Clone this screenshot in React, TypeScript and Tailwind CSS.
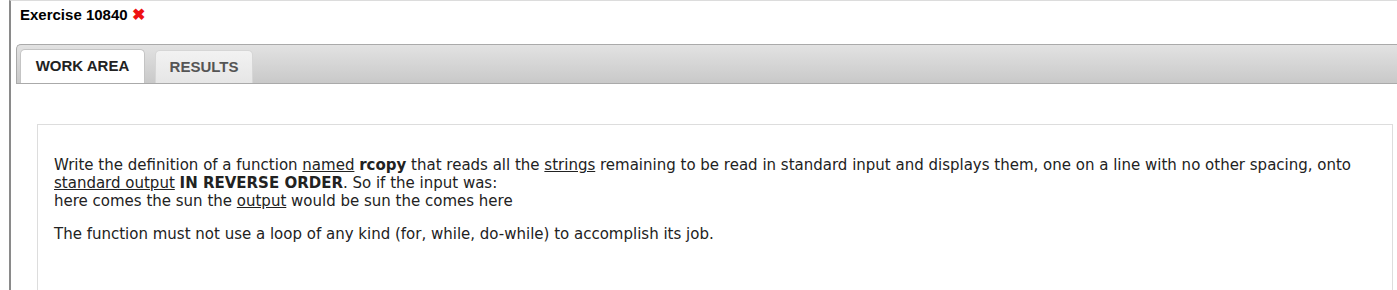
import React from "react";

export default function App() {
  return (
    <div className="w-[1397px] h-[290px] overflow-hidden bg-white" style={{ fontFamily: '"Liberation Sans", Arial, sans-serif' }}>
      <div className="ml-[9px] h-[290px] border-l-2 border-l-[#8a8a8a] border-t border-t-[#dcdcdc]">
        <div className="pl-[9px] pt-[5px] h-[43px] text-[15px] font-bold text-black flex items-start leading-[18px]">
          <span>Exercise 10840</span>
          <span className="ml-[4px] text-[#ee1111] text-[16px] leading-[18px]">✖</span>
        </div>
        <div className="ml-[5px] h-[40px] border border-[#aaaaaa] border-r-0 rounded-tl-[5px] bg-gradient-to-b from-[#e2e2e2] to-[#c9c9c9] flex items-end pl-[3px] gap-[10px]">
          <div className="w-[125px] h-[34px] bg-white border border-[#c4c4c4] border-b-0 rounded-t-[5px] flex items-center justify-center text-[15px] font-bold text-[#222]">
            WORK AREA
          </div>
          <div className="w-[98px] h-[33px] bg-gradient-to-b from-[#f2f2f2] to-[#e6e6e6] border border-[#d6d6d6] border-b-0 rounded-t-[5px] flex items-center justify-center text-[15px] font-bold text-[#555]">
            RESULTS
          </div>
        </div>
        <div className="ml-[26px] mr-[4px] mt-[40px] h-[200px] border border-[#dddddd] pl-[16px] pr-[20px] pt-[31px] text-[15px] leading-[18px] text-[#222]" style={{ fontFamily: '"DejaVu Sans", Verdana, sans-serif' }}>
          <p>
            Write the definition of a function <u>named</u> <b>rcopy</b> that reads all the <u>strings</u> remaining to be read in standard input and displays them, one on a line with no other spacing, onto <u>standard output</u> <b>IN REVERSE ORDER</b>. So if the input was:
            <br />
            here comes the sun the <u>output</u> would be sun the comes here
          </p>
          <p className="mt-[15px]">The function must not use a loop of any kind (for, while, do-while) to accomplish its job.</p>
        </div>
      </div>
    </div>
  );
}
